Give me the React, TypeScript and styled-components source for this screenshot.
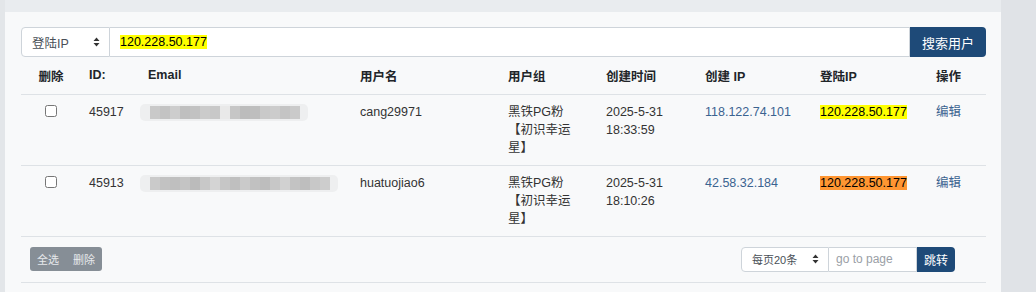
import React from "react";
import styled, { createGlobalStyle } from "styled-components";

const GlobalStyle = createGlobalStyle`
  body {
    margin: 0;
    background: #e2e5e8;
    font-family: "Liberation Sans", Arial, "Noto Sans CJK SC", sans-serif;
    font-size: 12.5px;
    color: #333;
  }
  *, *::before, *::after {
    box-sizing: border-box;
  }
`;

const Page = styled.div`
  display: flex;
  width: 1036px;
  height: 292px;
  overflow: hidden;
`;

const LeftStrip = styled.div`
  width: 5px;
  background: #e3e6e9;
`;

const Main = styled.div`
  width: 996px;
  background: #e9ecef;
  padding-top: 12px;
`;

const RightSide = styled.div`
  flex: 1;
  background: #e0e3e7;
`;

const Panel = styled.div`
  background: #f8f9fa;
  height: 100%;
  padding: 15px 15px 0 16px;
`;

const SearchBar = styled.div`
  display: flex;
  height: 30px;
`;

const SelectBox = styled.div<{ $width: number; $small?: boolean }>`
  width: ${(p) => p.$width}px;
  display: flex;
  align-items: center;
  justify-content: space-between;
  padding: 0 9px 0 10px;
  background: #fff;
  border: 1px solid #ced4da;
  border-radius: 4px 0 0 4px;
  color: #495057;
  font-size: ${(p) => (p.$small ? "11px" : "12.5px")};
`;

const SearchInput = styled.div`
  flex: 1;
  display: flex;
  align-items: center;
  padding-left: 10px;
  background: #fff;
  border: 1px solid #ced4da;
  border-left: none;
  color: #111;
`;

const Mark = styled.span<{ $active?: boolean }>`
  background: ${(p) => (p.$active ? "#ff9632" : "#ffff00")};
  color: #000;
`;

const DarkButton = styled.button<{ $small?: boolean }>`
  border: none;
  background: #1e4a78;
  color: #fff;
  font-family: "Noto Sans CJK SC", sans-serif;
  font-size: ${(p) => (p.$small ? "12px" : "13px")};
  padding: 0 ${(p) => (p.$small ? "7px" : "12px")};
  border-radius: 0 4px 4px 0;
  cursor: pointer;
`;

const Table = styled.table`
  width: 965px;
  border-collapse: collapse;
  table-layout: fixed;
`;

const Th = styled.th<{ $width: number; $center?: boolean }>`
  width: ${(p) => p.$width}px;
  height: 37px;
  padding: 0 8px;
  text-align: ${(p) => (p.$center ? "center" : "left")};
  font-weight: bold;
  color: #212529;
  border-bottom: 1px solid #dee2e6;
  white-space: nowrap;
`;

const Td = styled.td<{ $center?: boolean; $flush?: boolean }>`
  padding: 8px ${(p) => (p.$flush ? "0" : "8px")};
  line-height: 18px;
  vertical-align: top;
  text-align: ${(p) => (p.$center ? "center" : "left")};
  border-bottom: 1px solid #dee2e6;
`;

const GroupName = styled.div`
  max-width: 72px;
`;

const Check = styled.input`
  margin: 2px 0 0 0;
  width: 12px;
  height: 12px;
`;

const Link = styled.a`
  color: #3b6390;
  text-decoration: none;
`;

const Blur = styled.div`
  display: inline-flex;
  align-items: center;
  height: 17px;
  margin-top: 1px;
  padding: 0 8px 0 10px;
  background: #eeeff0;
  border-radius: 5px;
  filter: blur(0.5px);
`;

const BlurBlock = styled.span<{ $shade: string }>`
  width: 10px;
  height: 13px;
  background: ${(p) => p.$shade};
`;

const Footer = styled.div`
  display: flex;
  justify-content: space-between;
  align-items: center;
  width: 965px;
  padding: 10px 31px 10px 9px;
  border-bottom: 1px solid #dee2e6;
`;

const GrayGroup = styled.div`
  display: flex;
  height: 24px;
  background: #868e96;
  border-radius: 3px;
`;

const GrayButton = styled.button`
  border: none;
  background: transparent;
  color: #e6e9ec;
  font-family: "Noto Sans CJK SC", sans-serif;
  font-size: 11px;
  padding: 0 7px;
`;

const Pager = styled.div`
  display: flex;
  height: 25px;
`;

const PageInput = styled.input`
  width: 88px;
  border: 1px solid #ced4da;
  border-left: none;
  padding: 0 7px;
  font-family: "Liberation Sans", Arial, sans-serif;
  font-size: 12px;
  outline: none;
  &::placeholder {
    color: #9aa0a6;
  }
`;

const Arrows = () => (
  <svg width="7" height="10" viewBox="0 0 7 10">
    <path d="M3.5 0.5 L6.5 4 L0.5 4 Z M3.5 9.5 L6.5 6 L0.5 6 Z" fill="#333" />
  </svg>
);

const BlurredEmail: React.FC<{ shades: string[] }> = ({ shades }) => (
  <Blur>
    {shades.map((s, i) => (
      <BlurBlock key={i} $shade={s} />
    ))}
  </Blur>
);

const COLUMNS = [
  { label: "删除", width: 60, center: true },
  { label: "ID:", width: 59 },
  { label: "Email", width: 212 },
  { label: "用户名", width: 148 },
  { label: "用户组", width: 98 },
  { label: "创建时间", width: 99 },
  { label: "创建 IP", width: 115 },
  { label: "登陆IP", width: 116 },
  { label: "操作", width: 58 },
];

const USERS = [
  {
    id: 45917,
    email: ["#c9c9c9", "#c3c3c3", "#cdcdcd", "#bfbfbf", "#c2c2c2", "#cbcbcb", "#c8c8c8", "#e9e9e9", "#c6c6c6", "#bcbcbc", "#bebebe", "#c9c9c9", "#cccccc", "#c4c4c4", "#cacaca"],
    name: "cang29971",
    created: ["2025-5-31", "18:33:59"],
    createIp: "118.122.74.101",
    active: false,
  },
  {
    id: 45913,
    email: ["#cacaca", "#c2c2c2", "#bfbfbf", "#c4c4c4", "#bbbbbb", "#c8c8c8", "#d4d4d4", "#c6c6c6", "#bfbfbf", "#cacaca", "#c1c1c1", "#bdbdbd", "#c7c7c7", "#d1d1d1", "#c3c3c3", "#bebebe", "#c8c8c8", "#cdcdcd"],
    name: "huatuojiao6",
    created: ["2025-5-31", "18:10:26"],
    createIp: "42.58.32.184",
    active: true,
  },
];

export default function App() {
  return (
    <Page>
      <GlobalStyle />
      <LeftStrip />
      <Main>
        <Panel>
          <SearchBar>
            <SelectBox $width={89}>
              登陆IP <Arrows />
            </SelectBox>
            <SearchInput>
              <Mark>120.228.50.177</Mark>
            </SearchInput>
            <DarkButton>搜索用户</DarkButton>
          </SearchBar>

          <Table>
            <thead>
              <tr>
                {COLUMNS.map((c) => (
                  <Th key={c.label} $width={c.width} $center={c.center}>
                    {c.label}
                  </Th>
                ))}
              </tr>
            </thead>
            <tbody>
              {USERS.map((u) => (
                <tr key={u.id}>
                  <Td $center>
                    <Check type="checkbox" />
                  </Td>
                  <Td>{u.id}</Td>
                  <Td $flush>
                    <BlurredEmail shades={u.email} />
                  </Td>
                  <Td>{u.name}</Td>
                  <Td>
                    <GroupName>
                      黑铁PG粉
                      <br />
                      【初识幸运星】
                    </GroupName>
                  </Td>
                  <Td>
                    {u.created[0]}
                    <br />
                    {u.created[1]}
                  </Td>
                  <Td>
                    <Link href="#">{u.createIp}</Link>
                  </Td>
                  <Td>
                    <Mark $active={u.active}>120.228.50.177</Mark>
                  </Td>
                  <Td>
                    <Link href="#">编辑</Link>
                  </Td>
                </tr>
              ))}
            </tbody>
          </Table>

          <Footer>
            <GrayGroup>
              <GrayButton>全选</GrayButton>
              <GrayButton>删除</GrayButton>
            </GrayGroup>
            <Pager>
              <SelectBox $width={88} $small>
                每页20条 <Arrows />
              </SelectBox>
              <PageInput placeholder="go to page" />
              <DarkButton $small>跳转</DarkButton>
            </Pager>
          </Footer>
        </Panel>
      </Main>
      <RightSide />
    </Page>
  );
}
